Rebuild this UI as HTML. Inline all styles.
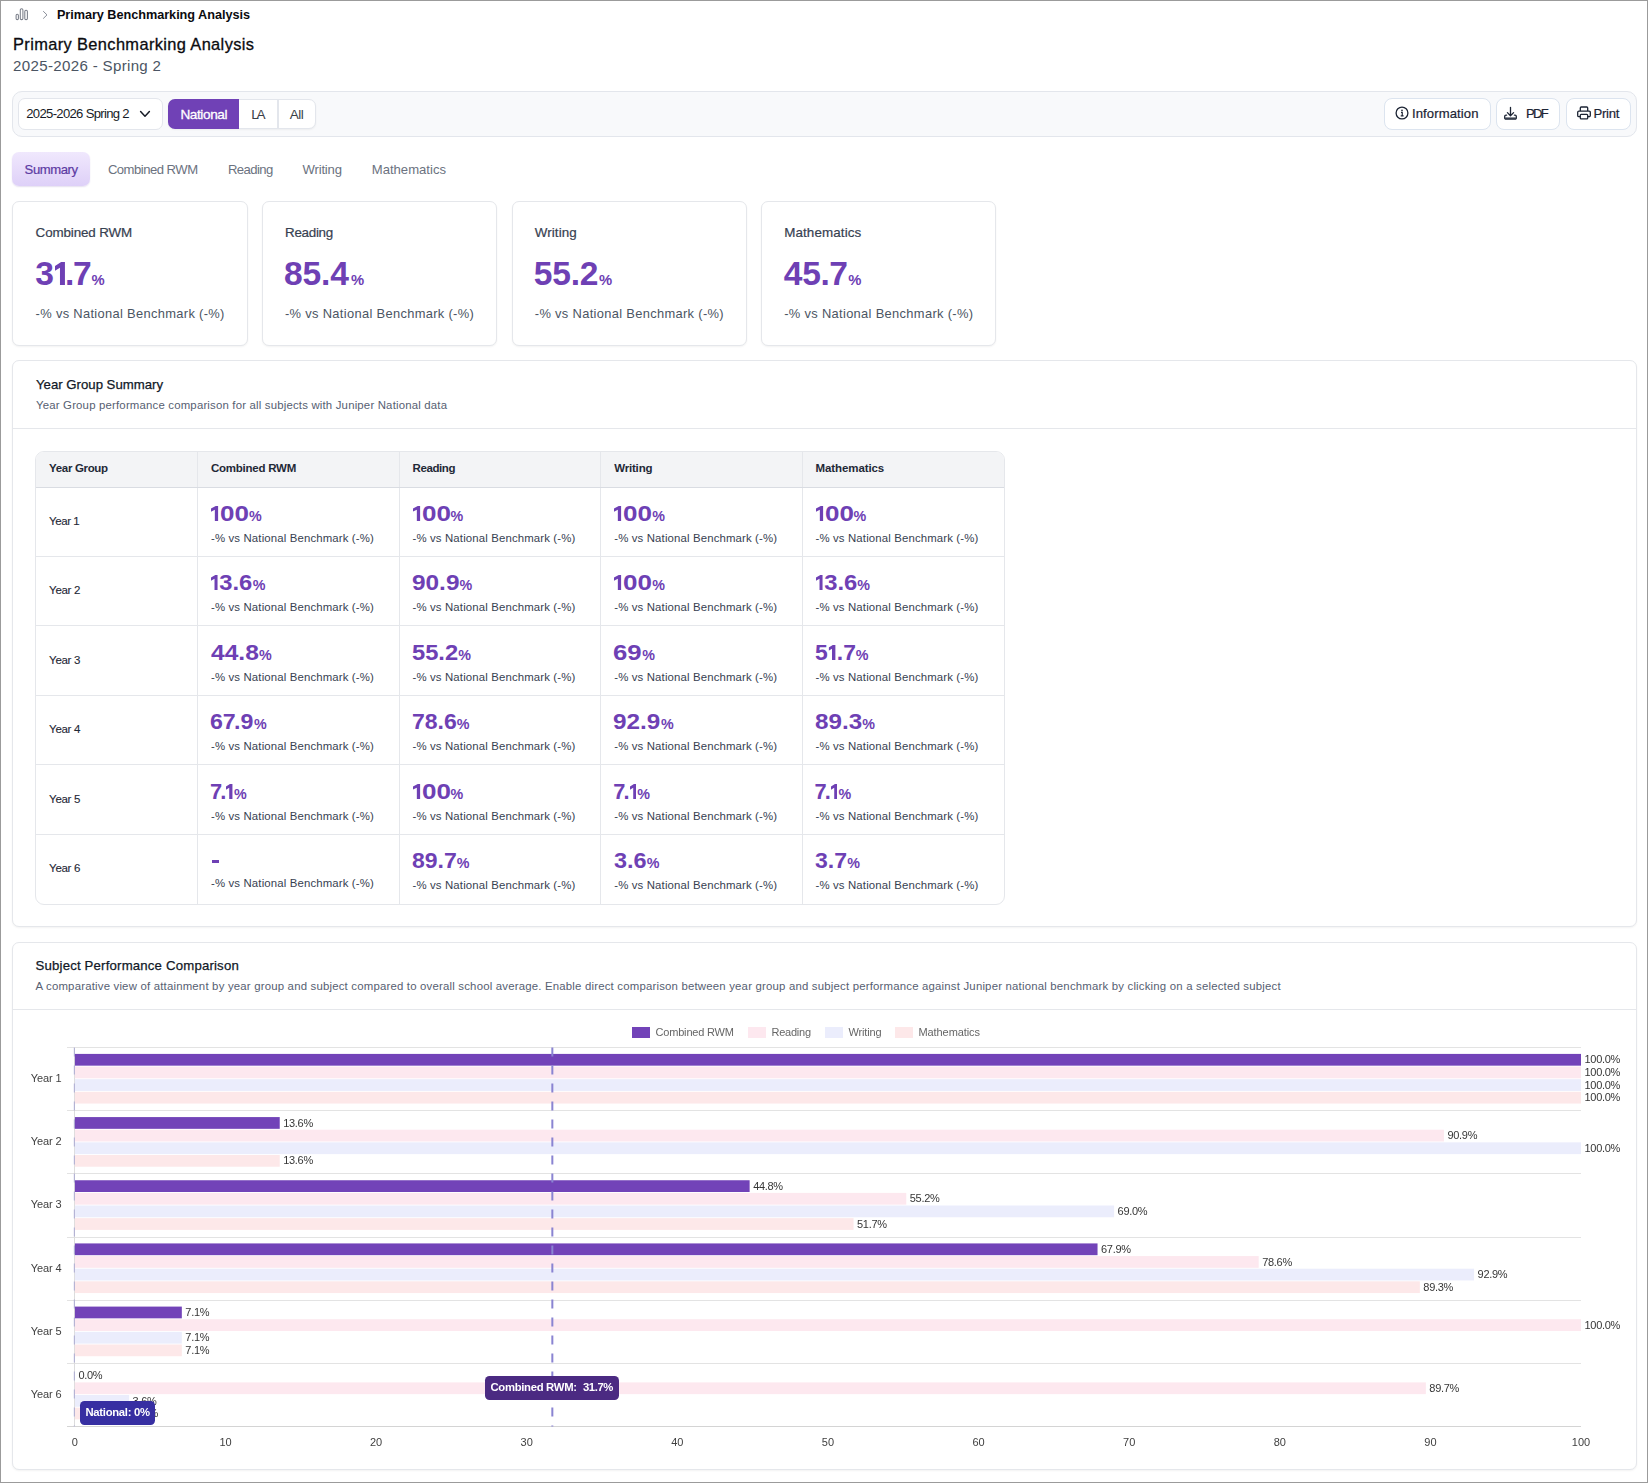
<!DOCTYPE html>
<html lang="en"><head><meta charset="utf-8"><title>Primary Benchmarking Analysis</title>
<style>
html,body{margin:0;padding:0;background:#fff}
body{width:1648px;height:1483px;position:relative;overflow:hidden;font-family:"Liberation Sans",sans-serif}
.t{position:absolute;white-space:pre;line-height:1;margin:0}
#frame{position:absolute;left:0;top:0;width:1648px;height:1483px;box-sizing:border-box;border:1px solid #9b9b9b}
</style></head><body>
<svg style="position:absolute;left:14px;top:7px" width="16" height="15" viewBox="0 0 16 15" fill="none" stroke="#7b7f8a" stroke-width="1.05">
<rect x="2.1" y="7.3" width="2.3" height="5.3" rx="1.1"/>
<rect x="6.3" y="1.8" width="2.6" height="10.8" rx="1.2"/>
<rect x="10.8" y="3.2" width="2.6" height="9.4" rx="1.2"/>
</svg>
<svg style="position:absolute;left:41px;top:10px" width="8" height="10" viewBox="0 0 8 10" fill="none" stroke="#8a8f99" stroke-width="1"><path d="M2.2 1.2 L6 4.9 L2.2 8.6"/></svg>
<div class="t" style="left:56.90px;top:9.00px;font-size:12.7px;color:#0b0b0f;font-weight:700;letter-spacing:-0.038px;">Primary Benchmarking Analysis</div>
<div class="t" style="left:13.00px;top:36.00px;font-size:16.4px;color:#0b0b0f;letter-spacing:0.376px;-webkit-text-stroke:0.3px #0b0b0f;">Primary Benchmarking Analysis</div>
<div class="t" style="left:13.10px;top:58.00px;font-size:15.1px;color:#4b5563;letter-spacing:0.320px;">2025-2026 - Spring 2</div>
<div style="position:absolute;left:12px;top:91px;width:1625px;height:46px;box-sizing:border-box;border:1px solid #e3e6ec;border-radius:10px;background:#f8f9fb"></div>
<div style="position:absolute;left:18px;top:98px;width:145px;height:32px;box-sizing:border-box;border:1px solid #e3e6ec;border-radius:7px;background:#fff"></div>
<div class="t" style="left:26.25px;top:107.00px;font-size:13.1px;color:#161b26;letter-spacing:-0.687px;">2025-2026 Spring 2</div>
<svg style="position:absolute;left:139.2px;top:109.3px" width="12" height="10" viewBox="0 0 12 10" fill="none" stroke="#161b26" stroke-width="1.5" stroke-linecap="round" stroke-linejoin="round"><path d="M1.6 2.6 L6 7.2 L10.4 2.6"/></svg>
<div style="position:absolute;left:168px;top:99px;width:148px;height:30px;box-sizing:border-box;border:1px solid #e3e6ec;border-radius:7px;background:#fff;box-shadow:0 1px 2px rgba(0,0,0,.05)"></div>
<div style="position:absolute;left:168px;top:99px;width:71px;height:30px;border-radius:7px 0 0 7px;background:#7041b6"></div>
<div style="position:absolute;left:277.3px;top:99.5px;width:1.4px;height:29px;background:#e3e6ec"></div>
<div class="t" style="left:180.40px;top:108.00px;font-size:13.6px;color:#fff;letter-spacing:-0.396px;-webkit-text-stroke:0.3px #fff;">National</div>
<div class="t" style="left:251.25px;top:108.00px;font-size:13.6px;color:#3a3f48;letter-spacing:-2.291px;">LA</div>
<div class="t" style="left:289.75px;top:108.00px;font-size:13.6px;color:#3a3f48;letter-spacing:-0.555px;">All</div>
<div style="position:absolute;left:1384px;top:98px;width:107px;height:32px;box-sizing:border-box;border:1px solid #dce4ef;border-radius:8px;background:#fff"></div>
<div style="position:absolute;left:1496px;top:98px;width:64px;height:32px;box-sizing:border-box;border:1px solid #dce4ef;border-radius:8px;background:#fff"></div>
<div style="position:absolute;left:1566px;top:98px;width:65px;height:32px;box-sizing:border-box;border:1px solid #dce4ef;border-radius:8px;background:#fff"></div>
<svg style="position:absolute;left:1394.4px;top:105px" width="16" height="16" viewBox="0 0 16 16" fill="none" stroke="#1c2434" stroke-width="1.3"><circle cx="8" cy="8" r="5.9"/><path d="M7 7.3 H8.25 V10.9 M6.7 10.9 H9.6" stroke-width="1.15"/><circle cx="8" cy="5.3" r="0.85" fill="#1c2434" stroke="none"/></svg>
<div class="t" style="left:1411.90px;top:107.00px;font-size:13.1px;color:#1c2434;letter-spacing:0.108px;-webkit-text-stroke:0.2px #1c2434;">Information</div>
<svg style="position:absolute;left:1503px;top:105.5px" width="15" height="15" viewBox="0 0 15 15" fill="none" stroke="#1c2434" stroke-width="1.3" stroke-linecap="round" stroke-linejoin="round"><path d="M7.5 1.3 V9.6 M4.4 6.6 L7.5 9.7 L10.6 6.6"/><path d="M3.6 9.2 H2.9 a1.2 1.2 0 0 0 -1.2 1.2 v1.6 a1.2 1.2 0 0 0 1.2 1.2 H12.1 a1.2 1.2 0 0 0 1.2 -1.2 v-1.6 a1.2 1.2 0 0 0 -1.2 -1.2 H11.4"/><path d="M2.6 12.1 H12.4" stroke-width="1.1"/></svg>
<div class="t" style="left:1526.00px;top:107.00px;font-size:13.1px;color:#1c2434;letter-spacing:-1.719px;-webkit-text-stroke:0.2px #1c2434;">PDF</div>
<svg style="position:absolute;left:1576px;top:105.3px" width="16" height="16" viewBox="0 0 16 16" fill="none" stroke="#1c2434" stroke-width="1.3" stroke-linejoin="round"><path d="M4.3 6 V3 a1 1 0 0 1 1 -1 H10.7 a1 1 0 0 1 1 1 V6"/><path d="M4.3 11.6 H2.9 a1.2 1.2 0 0 1 -1.2 -1.2 V7.3 a1.2 1.2 0 0 1 1.2 -1.2 H13.1 a1.2 1.2 0 0 1 1.2 1.2 V10.4 a1.2 1.2 0 0 1 -1.2 1.2 H11.7"/><rect x="4.3" y="9.3" width="7.4" height="4.6" rx="0.9"/></svg>
<div class="t" style="left:1593.50px;top:107.00px;font-size:13.1px;color:#1c2434;letter-spacing:-0.284px;-webkit-text-stroke:0.2px #1c2434;">Print</div>
<div style="position:absolute;left:12px;top:151.5px;width:78px;height:34.5px;border-radius:7px;background:linear-gradient(#f0e8fd,#ded0f8);box-shadow:0 1px 1.5px rgba(80,40,150,.14)"></div>
<div class="t" style="left:24.60px;top:163.00px;font-size:13.1px;color:#5c3aa3;letter-spacing:-0.422px;-webkit-text-stroke:0.2px #5c3aa3;">Summary</div>
<div class="t" style="left:107.90px;top:163.00px;font-size:13.1px;color:#6b7280;letter-spacing:-0.510px;">Combined RWM</div>
<div class="t" style="left:228.00px;top:163.00px;font-size:13.1px;color:#6b7280;letter-spacing:-0.589px;">Reading</div>
<div class="t" style="left:302.50px;top:163.00px;font-size:13.1px;color:#6b7280;letter-spacing:-0.169px;">Writing</div>
<div class="t" style="left:371.75px;top:163.00px;font-size:13.1px;color:#6b7280;">Mathematics</div>
<div style="position:absolute;left:12px;top:201px;width:236px;height:145px;box-sizing:border-box;border:1px solid #e5e7eb;border-radius:7px;background:#fff;box-shadow:0 1px 2px rgba(0,0,0,.05)"></div>
<div class="t" style="left:35.60px;top:226.00px;font-size:13.4px;color:#374151;letter-spacing:-0.121px;-webkit-text-stroke:0.2px #374151;">Combined RWM</div>
<div class="t" style="left:35.26px;top:257.00px;font-size:33.6px;color:#6e40b4;font-weight:700;"><span style="letter-spacing:0.72px">3</span><svg width="9.94" height="23.12" viewBox="0 0 0.43 1" preserveAspectRatio="none" style="display:inline-block;vertical-align:baseline;margin-right:0.35px"><path fill="#6e40b4" d="M0.43 0 H0.265 L0 0.17 V0.375 L0.215 0.245 V1 H0.43 Z"/></svg><span style="letter-spacing:-1.29px">.</span>7<span style="font-size:14.8px;margin-left:-0.16px">%</span></div>
<div class="t" style="left:35.60px;top:308.00px;font-size:12.9px;color:#4b5563;letter-spacing:0.321px;">-% vs National Benchmark (-%)</div>
<div style="position:absolute;left:262px;top:201px;width:235px;height:145px;box-sizing:border-box;border:1px solid #e5e7eb;border-radius:7px;background:#fff;box-shadow:0 1px 2px rgba(0,0,0,.05)"></div>
<div class="t" style="left:285.00px;top:226.00px;font-size:13.4px;color:#374151;letter-spacing:-0.273px;-webkit-text-stroke:0.2px #374151;">Reading</div>
<div class="t" style="left:283.96px;top:257.00px;font-size:33.6px;color:#6e40b4;font-weight:700;"><span style="letter-spacing:-0.11px">8</span><span style="letter-spacing:-0.17px">5</span><span style="letter-spacing:-0.15px">.</span>4<span style="font-size:14.8px;margin-left:1.97px">%</span></div>
<div class="t" style="left:285.00px;top:308.00px;font-size:12.9px;color:#4b5563;letter-spacing:0.321px;">-% vs National Benchmark (-%)</div>
<div style="position:absolute;left:512px;top:201px;width:235px;height:145px;box-sizing:border-box;border:1px solid #e5e7eb;border-radius:7px;background:#fff;box-shadow:0 1px 2px rgba(0,0,0,.05)"></div>
<div class="t" style="left:534.80px;top:226.00px;font-size:13.4px;color:#374151;letter-spacing:0.080px;-webkit-text-stroke:0.2px #374151;">Writing</div>
<div class="t" style="left:533.79px;top:257.00px;font-size:33.6px;color:#6e40b4;font-weight:700;"><span style="letter-spacing:-0.15px">5</span><span style="letter-spacing:-0.25px">5</span><span style="letter-spacing:-0.27px">.</span>2<span style="font-size:14.8px;margin-left:0.53px">%</span></div>
<div class="t" style="left:534.80px;top:308.00px;font-size:12.9px;color:#4b5563;letter-spacing:0.321px;">-% vs National Benchmark (-%)</div>
<div style="position:absolute;left:761px;top:201px;width:235px;height:145px;box-sizing:border-box;border:1px solid #e5e7eb;border-radius:7px;background:#fff;box-shadow:0 1px 2px rgba(0,0,0,.05)"></div>
<div class="t" style="left:784.20px;top:226.00px;font-size:13.4px;color:#374151;letter-spacing:0.119px;-webkit-text-stroke:0.2px #374151;">Mathematics</div>
<div class="t" style="left:783.70px;top:257.00px;font-size:33.6px;color:#6e40b4;font-weight:700;"><span style="letter-spacing:-0.18px">4</span><span style="letter-spacing:-0.49px">5</span><span style="letter-spacing:-0.57px">.</span>7<span style="font-size:14.8px;margin-left:0.39px">%</span></div>
<div class="t" style="left:784.20px;top:308.00px;font-size:12.9px;color:#4b5563;letter-spacing:0.321px;">-% vs National Benchmark (-%)</div>
<div style="position:absolute;left:12px;top:360px;width:1625px;height:567px;box-sizing:border-box;border:1px solid #e5e7eb;border-radius:7px;background:#fff;box-shadow:0 1px 2px rgba(0,0,0,.05)"></div>
<div class="t" style="left:36.00px;top:378.00px;font-size:13.2px;color:#111827;-webkit-text-stroke:0.25px #111827;">Year Group Summary</div>
<div class="t" style="left:36.00px;top:400.00px;font-size:11.4px;color:#566072;letter-spacing:0.182px;">Year Group performance comparison for all subjects with Juniper National data</div>
<div style="position:absolute;left:13px;top:428px;width:1623px;height:1px;background:#e5e7eb"></div>
<div style="position:absolute;left:35px;top:451px;width:970px;height:454px;box-sizing:border-box;border:1px solid #e5e7eb;border-radius:9px;background:#fff;overflow:hidden"><div style="position:absolute;left:0;top:0;width:100%;height:34.5px;background:#f3f4f6"></div><div style="position:absolute;left:161px;top:0;width:1px;height:100%;background:#e5e7eb"></div><div style="position:absolute;left:363px;top:0;width:1px;height:100%;background:#e5e7eb"></div><div style="position:absolute;left:564px;top:0;width:1px;height:100%;background:#e5e7eb"></div><div style="position:absolute;left:766px;top:0;width:1px;height:100%;background:#e5e7eb"></div><div style="position:absolute;left:0;top:34.5px;width:100%;height:1.4px;background:#d9dce2"></div><div style="position:absolute;left:0;top:104px;width:100%;height:1px;background:#e5e7eb"></div><div style="position:absolute;left:0;top:173px;width:100%;height:1px;background:#e5e7eb"></div><div style="position:absolute;left:0;top:243px;width:100%;height:1px;background:#e5e7eb"></div><div style="position:absolute;left:0;top:312px;width:100%;height:1px;background:#e5e7eb"></div><div style="position:absolute;left:0;top:382px;width:100%;height:1px;background:#e5e7eb"></div></div>
<div class="t" style="left:49.10px;top:463.00px;font-size:11.5px;color:#1f2937;font-weight:700;letter-spacing:-0.333px;">Year Group</div>
<div class="t" style="left:211.00px;top:463.00px;font-size:11.5px;color:#1f2937;font-weight:700;letter-spacing:-0.246px;">Combined RWM</div>
<div class="t" style="left:412.50px;top:463.00px;font-size:11.5px;color:#1f2937;font-weight:700;letter-spacing:-0.396px;">Reading</div>
<div class="t" style="left:614.25px;top:463.00px;font-size:11.5px;color:#1f2937;font-weight:700;letter-spacing:-0.193px;">Writing</div>
<div class="t" style="left:815.50px;top:463.00px;font-size:11.5px;color:#1f2937;font-weight:700;letter-spacing:-0.092px;">Mathematics</div>
<div class="t" style="left:49.10px;top:516.00px;font-size:11.5px;color:#1f2937;letter-spacing:-0.436px;-webkit-text-stroke:0.12px #1f2937;">Year 1</div>
<div class="t" style="left:211.00px;top:503.00px;font-size:21.8px;color:#6e40b4;font-weight:700;"><span style="display:inline-block;transform:scaleX(1.1924);transform-origin:0 0"><svg width="6.45" height="15.00" viewBox="0 0 0.43 1" preserveAspectRatio="none" style="display:inline-block;vertical-align:baseline;margin-right:1.12px"><path fill="#6e40b4" d="M0.43 0 H0.265 L0 0.17 V0.375 L0.215 0.245 V1 H0.43 Z"/></svg>00</span><span style="font-size:14.3px;margin-left:6.23px">%</span></div>
<div class="t" style="left:211.00px;top:533.00px;font-size:11.4px;color:#374151;letter-spacing:0.140px;">-% vs National Benchmark (-%)</div>
<div class="t" style="left:412.50px;top:503.00px;font-size:21.8px;color:#6e40b4;font-weight:700;"><span style="display:inline-block;transform:scaleX(1.1924);transform-origin:0 0"><svg width="6.45" height="15.00" viewBox="0 0 0.43 1" preserveAspectRatio="none" style="display:inline-block;vertical-align:baseline;margin-right:1.12px"><path fill="#6e40b4" d="M0.43 0 H0.265 L0 0.17 V0.375 L0.215 0.245 V1 H0.43 Z"/></svg>00</span><span style="font-size:14.3px;margin-left:6.23px">%</span></div>
<div class="t" style="left:412.50px;top:533.00px;font-size:11.4px;color:#374151;letter-spacing:0.140px;">-% vs National Benchmark (-%)</div>
<div class="t" style="left:614.25px;top:503.00px;font-size:21.8px;color:#6e40b4;font-weight:700;"><span style="display:inline-block;transform:scaleX(1.1924);transform-origin:0 0"><svg width="6.45" height="15.00" viewBox="0 0 0.43 1" preserveAspectRatio="none" style="display:inline-block;vertical-align:baseline;margin-right:1.12px"><path fill="#6e40b4" d="M0.43 0 H0.265 L0 0.17 V0.375 L0.215 0.245 V1 H0.43 Z"/></svg>00</span><span style="font-size:14.3px;margin-left:6.23px">%</span></div>
<div class="t" style="left:614.25px;top:533.00px;font-size:11.4px;color:#374151;letter-spacing:0.140px;">-% vs National Benchmark (-%)</div>
<div class="t" style="left:815.50px;top:503.00px;font-size:21.8px;color:#6e40b4;font-weight:700;"><span style="display:inline-block;transform:scaleX(1.1924);transform-origin:0 0"><svg width="6.45" height="15.00" viewBox="0 0 0.43 1" preserveAspectRatio="none" style="display:inline-block;vertical-align:baseline;margin-right:1.12px"><path fill="#6e40b4" d="M0.43 0 H0.265 L0 0.17 V0.375 L0.215 0.245 V1 H0.43 Z"/></svg>00</span><span style="font-size:14.3px;margin-left:6.23px">%</span></div>
<div class="t" style="left:815.50px;top:533.00px;font-size:11.4px;color:#374151;letter-spacing:0.140px;">-% vs National Benchmark (-%)</div>
<div class="t" style="left:49.10px;top:585.00px;font-size:11.5px;color:#1f2937;letter-spacing:-0.316px;-webkit-text-stroke:0.12px #1f2937;">Year 2</div>
<div class="t" style="left:211.00px;top:572.00px;font-size:21.8px;color:#6e40b4;font-weight:700;"><span style="display:inline-block;transform:scaleX(1.0913);transform-origin:0 0"><svg width="6.45" height="15.00" viewBox="0 0 0.43 1" preserveAspectRatio="none" style="display:inline-block;vertical-align:baseline;margin-right:1.12px"><path fill="#6e40b4" d="M0.43 0 H0.265 L0 0.17 V0.375 L0.215 0.245 V1 H0.43 Z"/></svg>3.6</span><span style="font-size:14.3px;margin-left:3.78px">%</span></div>
<div class="t" style="left:211.00px;top:602.00px;font-size:11.4px;color:#374151;letter-spacing:0.140px;">-% vs National Benchmark (-%)</div>
<div class="t" style="left:411.67px;top:572.00px;font-size:21.8px;color:#6e40b4;font-weight:700;"><span style="display:inline-block;transform:scaleX(1.1186);transform-origin:0 0">90.9</span><span style="font-size:14.3px;margin-left:5.31px">%</span></div>
<div class="t" style="left:412.50px;top:602.00px;font-size:11.4px;color:#374151;letter-spacing:0.140px;">-% vs National Benchmark (-%)</div>
<div class="t" style="left:614.25px;top:572.00px;font-size:21.8px;color:#6e40b4;font-weight:700;"><span style="display:inline-block;transform:scaleX(1.1924);transform-origin:0 0"><svg width="6.45" height="15.00" viewBox="0 0 0.43 1" preserveAspectRatio="none" style="display:inline-block;vertical-align:baseline;margin-right:1.12px"><path fill="#6e40b4" d="M0.43 0 H0.265 L0 0.17 V0.375 L0.215 0.245 V1 H0.43 Z"/></svg>00</span><span style="font-size:14.3px;margin-left:6.23px">%</span></div>
<div class="t" style="left:614.25px;top:602.00px;font-size:11.4px;color:#374151;letter-spacing:0.140px;">-% vs National Benchmark (-%)</div>
<div class="t" style="left:815.50px;top:572.00px;font-size:21.8px;color:#6e40b4;font-weight:700;"><span style="display:inline-block;transform:scaleX(1.0913);transform-origin:0 0"><svg width="6.45" height="15.00" viewBox="0 0 0.43 1" preserveAspectRatio="none" style="display:inline-block;vertical-align:baseline;margin-right:1.12px"><path fill="#6e40b4" d="M0.43 0 H0.265 L0 0.17 V0.375 L0.215 0.245 V1 H0.43 Z"/></svg>3.6</span><span style="font-size:14.3px;margin-left:3.78px">%</span></div>
<div class="t" style="left:815.50px;top:602.00px;font-size:11.4px;color:#374151;letter-spacing:0.140px;">-% vs National Benchmark (-%)</div>
<div class="t" style="left:49.10px;top:655.00px;font-size:11.5px;color:#1f2937;letter-spacing:-0.316px;-webkit-text-stroke:0.12px #1f2937;">Year 3</div>
<div class="t" style="left:210.63px;top:642.00px;font-size:21.8px;color:#6e40b4;font-weight:700;"><span style="display:inline-block;transform:scaleX(1.1280);transform-origin:0 0">44.8</span><span style="font-size:14.3px;margin-left:5.85px">%</span></div>
<div class="t" style="left:211.00px;top:672.00px;font-size:11.4px;color:#374151;letter-spacing:0.140px;">-% vs National Benchmark (-%)</div>
<div class="t" style="left:411.79px;top:642.00px;font-size:21.8px;color:#6e40b4;font-weight:700;"><span style="display:inline-block;transform:scaleX(1.0874);transform-origin:0 0">55.2</span><span style="font-size:14.3px;margin-left:3.94px">%</span></div>
<div class="t" style="left:412.50px;top:672.00px;font-size:11.4px;color:#374151;letter-spacing:0.140px;">-% vs National Benchmark (-%)</div>
<div class="t" style="left:613.32px;top:642.00px;font-size:21.8px;color:#6e40b4;font-weight:700;"><span style="display:inline-block;transform:scaleX(1.1797);transform-origin:0 0">69</span><span style="font-size:14.3px;margin-left:4.58px">%</span></div>
<div class="t" style="left:614.25px;top:672.00px;font-size:11.4px;color:#374151;letter-spacing:0.140px;">-% vs National Benchmark (-%)</div>
<div class="t" style="left:814.81px;top:642.00px;font-size:21.8px;color:#6e40b4;font-weight:700;"><span style="display:inline-block;transform:scaleX(1.0492);transform-origin:0 0"><span style="letter-spacing:1.12px">5</span><svg width="6.45" height="15.00" viewBox="0 0 0.43 1" preserveAspectRatio="none" style="display:inline-block;vertical-align:baseline;margin-right:1.12px"><path fill="#6e40b4" d="M0.43 0 H0.265 L0 0.17 V0.375 L0.215 0.245 V1 H0.43 Z"/></svg>.7</span><span style="font-size:14.3px;margin-left:2.09px">%</span></div>
<div class="t" style="left:815.50px;top:672.00px;font-size:11.4px;color:#374151;letter-spacing:0.140px;">-% vs National Benchmark (-%)</div>
<div class="t" style="left:49.10px;top:724.00px;font-size:11.5px;color:#1f2937;letter-spacing:-0.316px;-webkit-text-stroke:0.12px #1f2937;">Year 4</div>
<div class="t" style="left:210.17px;top:711.00px;font-size:21.8px;color:#6e40b4;font-weight:700;"><span style="display:inline-block;transform:scaleX(1.0615);transform-origin:0 0">6<span style="letter-spacing:-1.53px">7</span>.9</span><span style="font-size:14.3px;margin-left:2.84px">%</span></div>
<div class="t" style="left:211.00px;top:741.00px;font-size:11.4px;color:#374151;letter-spacing:0.140px;">-% vs National Benchmark (-%)</div>
<div class="t" style="left:411.53px;top:711.00px;font-size:21.8px;color:#6e40b4;font-weight:700;"><span style="display:inline-block;transform:scaleX(1.0553);transform-origin:0 0">78.6</span><span style="font-size:14.3px;margin-left:2.69px">%</span></div>
<div class="t" style="left:412.50px;top:741.00px;font-size:11.4px;color:#374151;letter-spacing:0.140px;">-% vs National Benchmark (-%)</div>
<div class="t" style="left:613.43px;top:711.00px;font-size:21.8px;color:#6e40b4;font-weight:700;"><span style="display:inline-block;transform:scaleX(1.1125);transform-origin:0 0">92.9</span><span style="font-size:14.3px;margin-left:5.05px">%</span></div>
<div class="t" style="left:614.25px;top:741.00px;font-size:11.4px;color:#374151;letter-spacing:0.140px;">-% vs National Benchmark (-%)</div>
<div class="t" style="left:814.75px;top:711.00px;font-size:21.8px;color:#6e40b4;font-weight:700;"><span style="display:inline-block;transform:scaleX(1.1101);transform-origin:0 0">89.3</span><span style="font-size:14.3px;margin-left:4.98px">%</span></div>
<div class="t" style="left:815.50px;top:741.00px;font-size:11.4px;color:#374151;letter-spacing:0.140px;">-% vs National Benchmark (-%)</div>
<div class="t" style="left:49.10px;top:794.00px;font-size:11.5px;color:#1f2937;letter-spacing:-0.316px;-webkit-text-stroke:0.12px #1f2937;">Year 5</div>
<div class="t" style="left:210.08px;top:781.00px;font-size:21.8px;color:#6e40b4;font-weight:700;"><span style="letter-spacing:-1.92px">7</span><span style="letter-spacing:-0.05px">.</span><svg width="6.45" height="15.00" viewBox="0 0 0.43 1" preserveAspectRatio="none" style="display:inline-block;vertical-align:baseline;margin-right:0.00px"><path fill="#6e40b4" d="M0.43 0 H0.265 L0 0.17 V0.375 L0.215 0.245 V1 H0.43 Z"/></svg><span style="font-size:14.3px;margin-left:1.16px">%</span></div>
<div class="t" style="left:211.00px;top:811.00px;font-size:11.4px;color:#374151;letter-spacing:0.140px;">-% vs National Benchmark (-%)</div>
<div class="t" style="left:412.50px;top:781.00px;font-size:21.8px;color:#6e40b4;font-weight:700;"><span style="display:inline-block;transform:scaleX(1.1924);transform-origin:0 0"><svg width="6.45" height="15.00" viewBox="0 0 0.43 1" preserveAspectRatio="none" style="display:inline-block;vertical-align:baseline;margin-right:1.12px"><path fill="#6e40b4" d="M0.43 0 H0.265 L0 0.17 V0.375 L0.215 0.245 V1 H0.43 Z"/></svg>00</span><span style="font-size:14.3px;margin-left:6.23px">%</span></div>
<div class="t" style="left:412.50px;top:811.00px;font-size:11.4px;color:#374151;letter-spacing:0.140px;">-% vs National Benchmark (-%)</div>
<div class="t" style="left:613.33px;top:781.00px;font-size:21.8px;color:#6e40b4;font-weight:700;"><span style="letter-spacing:-1.92px">7</span><span style="letter-spacing:-0.05px">.</span><svg width="6.45" height="15.00" viewBox="0 0 0.43 1" preserveAspectRatio="none" style="display:inline-block;vertical-align:baseline;margin-right:0.00px"><path fill="#6e40b4" d="M0.43 0 H0.265 L0 0.17 V0.375 L0.215 0.245 V1 H0.43 Z"/></svg><span style="font-size:14.3px;margin-left:1.16px">%</span></div>
<div class="t" style="left:614.25px;top:811.00px;font-size:11.4px;color:#374151;letter-spacing:0.140px;">-% vs National Benchmark (-%)</div>
<div class="t" style="left:814.58px;top:781.00px;font-size:21.8px;color:#6e40b4;font-weight:700;"><span style="letter-spacing:-1.92px">7</span><span style="letter-spacing:-0.05px">.</span><svg width="6.45" height="15.00" viewBox="0 0 0.43 1" preserveAspectRatio="none" style="display:inline-block;vertical-align:baseline;margin-right:0.00px"><path fill="#6e40b4" d="M0.43 0 H0.265 L0 0.17 V0.375 L0.215 0.245 V1 H0.43 Z"/></svg><span style="font-size:14.3px;margin-left:1.16px">%</span></div>
<div class="t" style="left:815.50px;top:811.00px;font-size:11.4px;color:#374151;letter-spacing:0.140px;">-% vs National Benchmark (-%)</div>
<div class="t" style="left:49.10px;top:863.00px;font-size:11.5px;color:#1f2937;letter-spacing:-0.316px;-webkit-text-stroke:0.12px #1f2937;">Year 6</div>
<div style="position:absolute;left:211.75px;top:859.7px;width:7.5px;height:3px;background:#6e40b4"></div>
<div class="t" style="left:211.00px;top:878.00px;font-size:11.4px;color:#374151;letter-spacing:0.140px;">-% vs National Benchmark (-%)</div>
<div class="t" style="left:411.79px;top:850.00px;font-size:21.8px;color:#6e40b4;font-weight:700;"><span style="display:inline-block;transform:scaleX(1.0536);transform-origin:0 0">89.7</span><span style="font-size:14.3px;margin-left:2.44px">%</span></div>
<div class="t" style="left:412.50px;top:880.00px;font-size:11.4px;color:#374151;letter-spacing:0.140px;">-% vs National Benchmark (-%)</div>
<div class="t" style="left:613.73px;top:850.00px;font-size:21.8px;color:#6e40b4;font-weight:700;"><span style="display:inline-block;transform:scaleX(1.0754);transform-origin:0 0">3.6</span><span style="font-size:14.3px;margin-left:2.62px">%</span></div>
<div class="t" style="left:614.25px;top:880.00px;font-size:11.4px;color:#374151;letter-spacing:0.140px;">-% vs National Benchmark (-%)</div>
<div class="t" style="left:814.99px;top:850.00px;font-size:21.8px;color:#6e40b4;font-weight:700;"><span style="display:inline-block;transform:scaleX(1.0559);transform-origin:0 0">3.7</span><span style="font-size:14.3px;margin-left:1.86px">%</span></div>
<div class="t" style="left:815.50px;top:880.00px;font-size:11.4px;color:#374151;letter-spacing:0.140px;">-% vs National Benchmark (-%)</div>
<div style="position:absolute;left:12px;top:942px;width:1625px;height:528px;box-sizing:border-box;border:1px solid #e5e7eb;border-radius:7px;background:#fff;box-shadow:0 1px 2px rgba(0,0,0,.05)"></div>
<div class="t" style="left:35.50px;top:959.00px;font-size:13.2px;color:#111827;letter-spacing:0.184px;-webkit-text-stroke:0.25px #111827;">Subject Performance Comparison</div>
<div class="t" style="left:35.50px;top:981.00px;font-size:11.4px;color:#566072;letter-spacing:0.191px;">A comparative view of attainment by year group and subject compared to overall school average. Enable direct comparison between year group and subject performance against Juniper national benchmark by clicking on a selected subject</div>
<div style="position:absolute;left:13px;top:1009px;width:1623px;height:1px;background:#e5e7eb"></div>
<div style="position:absolute;left:0;top:0;width:1648px;height:1483px;will-change:transform">
<div style="position:absolute;left:632px;top:1027.3px;width:18px;height:10.7px;background:#7243b8"></div>
<div class="t" style="left:655.50px;top:1027.40px;font-size:11px;color:#666;letter-spacing:-0.182px;">Combined RWM</div>
<div style="position:absolute;left:748px;top:1027.3px;width:18px;height:10.7px;background:#fde8ef"></div>
<div class="t" style="left:771.50px;top:1027.40px;font-size:11px;color:#666;letter-spacing:-0.247px;">Reading</div>
<div style="position:absolute;left:825px;top:1027.3px;width:18px;height:10.7px;background:#ebedfc"></div>
<div class="t" style="left:848.50px;top:1027.40px;font-size:11px;color:#666;letter-spacing:-0.172px;">Writing</div>
<div style="position:absolute;left:895px;top:1027.3px;width:18px;height:10.7px;background:#fde8e9"></div>
<div class="t" style="left:918.50px;top:1027.40px;font-size:11px;color:#666;letter-spacing:-0.086px;">Mathematics</div>
<svg style="position:absolute;left:0;top:0" width="1648" height="1483" viewBox="0 0 1648 1483" shape-rendering="crispEdges"><rect x="67" y="1047.00" width="1514.00" height="1" fill="#e3e3e3"/><rect x="67" y="1110.17" width="1514.00" height="1" fill="#e3e3e3"/><rect x="67" y="1173.34" width="1514.00" height="1" fill="#e3e3e3"/><rect x="67" y="1236.51" width="1514.00" height="1" fill="#e3e3e3"/><rect x="67" y="1299.68" width="1514.00" height="1" fill="#e3e3e3"/><rect x="67" y="1362.85" width="1514.00" height="1" fill="#e3e3e3"/><rect x="67" y="1426.02" width="1514.00" height="1" fill="#d4d4d4"/><rect x="74" y="1047.5" width="1" height="379.02" fill="#dcdcdc"/><rect x="74.90" y="1053.91" width="1506.10" height="11.75" fill="#7243b8" shape-rendering="auto"/><rect x="74.90" y="1066.54" width="1506.10" height="11.75" fill="#fde8ef" shape-rendering="auto"/><rect x="74.90" y="1079.18" width="1506.10" height="11.75" fill="#ebedfc" shape-rendering="auto"/><rect x="74.90" y="1091.81" width="1506.10" height="11.75" fill="#fde8e9" shape-rendering="auto"/><rect x="74.90" y="1117.08" width="204.83" height="11.75" fill="#7243b8" shape-rendering="auto"/><rect x="74.90" y="1129.71" width="1369.04" height="11.75" fill="#fde8ef" shape-rendering="auto"/><rect x="74.90" y="1142.35" width="1506.10" height="11.75" fill="#ebedfc" shape-rendering="auto"/><rect x="74.90" y="1154.98" width="204.83" height="11.75" fill="#fde8e9" shape-rendering="auto"/><rect x="74.90" y="1180.25" width="674.73" height="11.75" fill="#7243b8" shape-rendering="auto"/><rect x="74.90" y="1192.88" width="831.37" height="11.75" fill="#fde8ef" shape-rendering="auto"/><rect x="74.90" y="1205.52" width="1039.21" height="11.75" fill="#ebedfc" shape-rendering="auto"/><rect x="74.90" y="1218.15" width="778.65" height="11.75" fill="#fde8e9" shape-rendering="auto"/><rect x="74.90" y="1243.42" width="1022.64" height="11.75" fill="#7243b8" shape-rendering="auto"/><rect x="74.90" y="1256.05" width="1183.79" height="11.75" fill="#fde8ef" shape-rendering="auto"/><rect x="74.90" y="1268.69" width="1399.17" height="11.75" fill="#ebedfc" shape-rendering="auto"/><rect x="74.90" y="1281.32" width="1344.95" height="11.75" fill="#fde8e9" shape-rendering="auto"/><rect x="74.90" y="1306.59" width="106.93" height="11.75" fill="#7243b8" shape-rendering="auto"/><rect x="74.90" y="1319.22" width="1506.10" height="11.75" fill="#fde8ef" shape-rendering="auto"/><rect x="74.90" y="1331.86" width="106.93" height="11.75" fill="#ebedfc" shape-rendering="auto"/><rect x="74.90" y="1344.49" width="106.93" height="11.75" fill="#fde8e9" shape-rendering="auto"/><rect x="74.90" y="1382.39" width="1350.97" height="11.75" fill="#fde8ef" shape-rendering="auto"/><rect x="74.90" y="1395.03" width="54.22" height="11.75" fill="#ebedfc" shape-rendering="auto"/><rect x="74.90" y="1407.66" width="55.73" height="11.75" fill="#fde8e9" shape-rendering="auto"/></svg>
<div class="t" style="left:1584.50px;top:1054.38px;font-size:11px;color:#363636;letter-spacing:-0.300px;">100.0%</div>
<div class="t" style="left:1584.50px;top:1067.02px;font-size:11px;color:#363636;letter-spacing:-0.300px;">100.0%</div>
<div class="t" style="left:1584.50px;top:1079.65px;font-size:11px;color:#363636;letter-spacing:-0.300px;">100.0%</div>
<div class="t" style="left:1584.50px;top:1092.29px;font-size:11px;color:#363636;letter-spacing:-0.300px;">100.0%</div>
<div class="t" style="left:283.23px;top:1117.55px;font-size:11px;color:#363636;letter-spacing:-0.300px;">13.6%</div>
<div class="t" style="left:1447.44px;top:1130.19px;font-size:11px;color:#363636;letter-spacing:-0.300px;">90.9%</div>
<div class="t" style="left:1584.50px;top:1142.82px;font-size:11px;color:#363636;letter-spacing:-0.300px;">100.0%</div>
<div class="t" style="left:283.23px;top:1155.46px;font-size:11px;color:#363636;letter-spacing:-0.300px;">13.6%</div>
<div class="t" style="left:753.13px;top:1180.72px;font-size:11px;color:#363636;letter-spacing:-0.300px;">44.8%</div>
<div class="t" style="left:909.77px;top:1193.36px;font-size:11px;color:#363636;letter-spacing:-0.300px;">55.2%</div>
<div class="t" style="left:1117.61px;top:1205.99px;font-size:11px;color:#363636;letter-spacing:-0.300px;">69.0%</div>
<div class="t" style="left:857.05px;top:1218.63px;font-size:11px;color:#363636;letter-spacing:-0.300px;">51.7%</div>
<div class="t" style="left:1101.04px;top:1243.89px;font-size:11px;color:#363636;letter-spacing:-0.300px;">67.9%</div>
<div class="t" style="left:1262.19px;top:1256.53px;font-size:11px;color:#363636;letter-spacing:-0.300px;">78.6%</div>
<div class="t" style="left:1477.57px;top:1269.16px;font-size:11px;color:#363636;letter-spacing:-0.300px;">92.9%</div>
<div class="t" style="left:1423.35px;top:1281.80px;font-size:11px;color:#363636;letter-spacing:-0.300px;">89.3%</div>
<div class="t" style="left:185.33px;top:1307.06px;font-size:11px;color:#363636;letter-spacing:-0.300px;">7.1%</div>
<div class="t" style="left:1584.50px;top:1319.70px;font-size:11px;color:#363636;letter-spacing:-0.300px;">100.0%</div>
<div class="t" style="left:185.33px;top:1332.33px;font-size:11px;color:#363636;letter-spacing:-0.300px;">7.1%</div>
<div class="t" style="left:185.33px;top:1344.97px;font-size:11px;color:#363636;letter-spacing:-0.300px;">7.1%</div>
<div class="t" style="left:78.40px;top:1370.23px;font-size:11px;color:#363636;letter-spacing:-0.300px;">0.0%</div>
<div class="t" style="left:1429.37px;top:1382.87px;font-size:11px;color:#363636;letter-spacing:-0.300px;">89.7%</div>
<div class="t" style="left:132.62px;top:1395.50px;font-size:11px;color:#363636;letter-spacing:-0.300px;">3.6%</div>
<div class="t" style="left:134.13px;top:1408.14px;font-size:11px;color:#363636;letter-spacing:-0.300px;">3.7%</div>
<div class="t" style="left:30.75px;top:1073.09px;font-size:11px;color:#3f3f3f;letter-spacing:-0.131px;">Year 1</div>
<div class="t" style="left:30.75px;top:1136.26px;font-size:11px;color:#3f3f3f;letter-spacing:-0.131px;">Year 2</div>
<div class="t" style="left:30.75px;top:1199.42px;font-size:11px;color:#3f3f3f;letter-spacing:-0.131px;">Year 3</div>
<div class="t" style="left:30.75px;top:1262.60px;font-size:11px;color:#3f3f3f;letter-spacing:-0.131px;">Year 4</div>
<div class="t" style="left:30.75px;top:1325.77px;font-size:11px;color:#3f3f3f;letter-spacing:-0.131px;">Year 5</div>
<div class="t" style="left:30.75px;top:1388.93px;font-size:11px;color:#3f3f3f;letter-spacing:-0.131px;">Year 6</div>
<div class="t" style="left:71.84px;top:1437.00px;font-size:11px;color:#3f3f3f;">0</div>
<div class="t" style="left:219.38px;top:1437.00px;font-size:11px;color:#3f3f3f;">10</div>
<div class="t" style="left:370.00px;top:1437.00px;font-size:11px;color:#3f3f3f;">20</div>
<div class="t" style="left:520.60px;top:1437.00px;font-size:11px;color:#3f3f3f;">30</div>
<div class="t" style="left:671.21px;top:1437.00px;font-size:11px;color:#3f3f3f;">40</div>
<div class="t" style="left:821.82px;top:1437.00px;font-size:11px;color:#3f3f3f;">50</div>
<div class="t" style="left:972.43px;top:1437.00px;font-size:11px;color:#3f3f3f;">60</div>
<div class="t" style="left:1123.05px;top:1437.00px;font-size:11px;color:#3f3f3f;">70</div>
<div class="t" style="left:1273.65px;top:1437.00px;font-size:11px;color:#3f3f3f;">80</div>
<div class="t" style="left:1424.27px;top:1437.00px;font-size:11px;color:#3f3f3f;">90</div>
<div class="t" style="left:1571.82px;top:1437.00px;font-size:11px;color:#3f3f3f;">100</div>
<svg style="position:absolute;left:0;top:0" width="1648" height="1483"><line x1="552.33" y1="1047.5" x2="552.33" y2="1426.52" stroke="#8a84d2" stroke-width="2" stroke-dasharray="9 9"/><line x1="74.3" y1="1047.5" x2="74.3" y2="1426.52" stroke="#6f6bc4" stroke-width="1" stroke-dasharray="9 9" opacity="0.45"/></svg>
<div style="position:absolute;left:485px;top:1376.3px;width:134px;height:24px;border-radius:4.5px;background:#4b2a82"></div>
<div class="t" style="left:490.50px;top:1382.00px;font-size:11.3px;color:#fff;font-weight:700;letter-spacing:-0.305px;">Combined RWM:</div>
<div class="t" style="left:583.00px;top:1382.00px;font-size:11.3px;color:#fff;font-weight:700;letter-spacing:-0.437px;">31.7%</div>
<div style="position:absolute;left:80px;top:1400.8px;width:74.9px;height:23.8px;border-radius:4.5px;background:#372fa2"></div>
<div class="t" style="left:85.50px;top:1407.20px;font-size:11.3px;color:#fff;font-weight:700;letter-spacing:-0.300px;">National: 0%</div>
</div>
<div id="frame"></div>
</body></html>
